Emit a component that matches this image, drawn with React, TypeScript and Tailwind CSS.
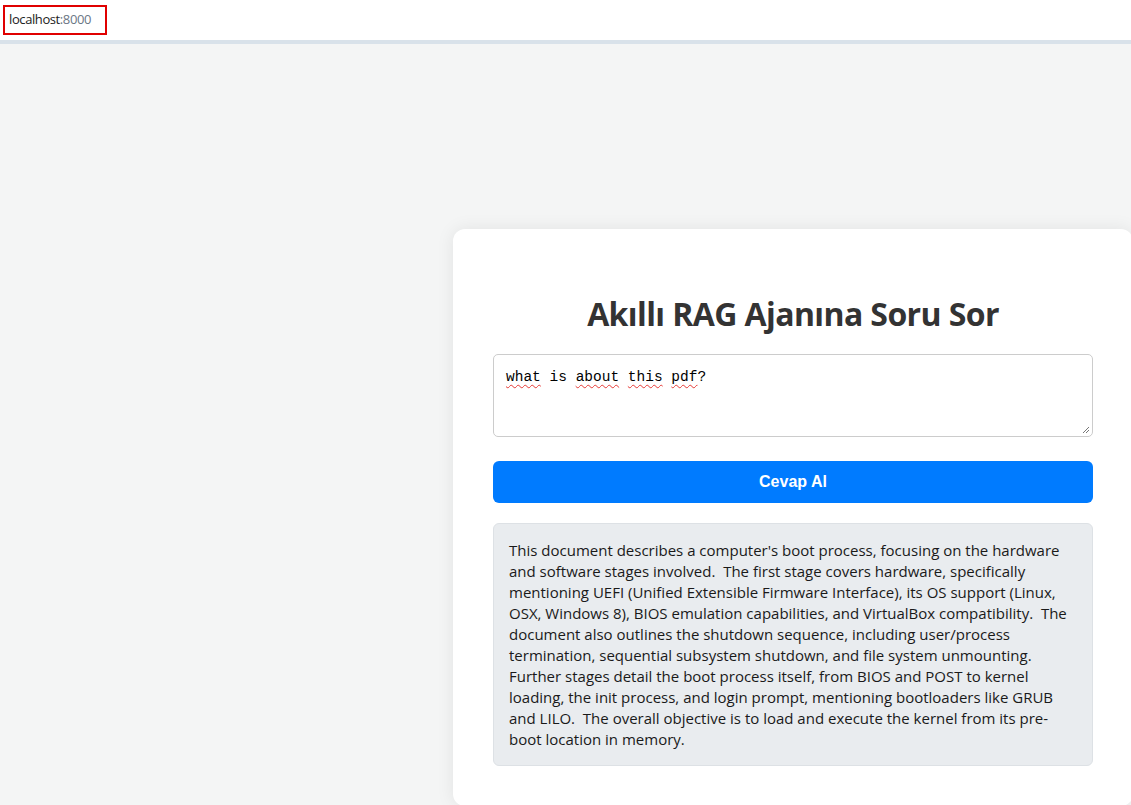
import React from "react";

const answer =
  "This document describes a computer's boot process, focusing on the hardware and software stages involved.\u00a0 The first stage covers hardware, specifically mentioning UEFI (Unified Extensible Firmware Interface), its OS support (Linux, OSX, Windows 8), BIOS emulation capabilities, and VirtualBox compatibility.\u00a0 The document also outlines the shutdown sequence, including user/process termination, sequential subsystem shutdown, and file system unmounting.\u00a0 Further stages detail the boot process itself, from BIOS and POST to kernel loading, the init process, and login prompt, mentioning bootloaders like GRUB and LILO.\u00a0 The overall objective is to load and execute the kernel from its pre-boot location in memory.";

function Squiggle({ children }: { children: React.ReactNode }) {
  return (
    <span className="underline decoration-wavy decoration-[#e53935] decoration-1 underline-offset-[3px]">
      {children}
    </span>
  );
}

export default function App() {
  return (
    <div className="h-[805px] w-[1131px] overflow-hidden bg-[#f4f5f5] font-['Open_Sans',sans-serif]">
      <div className="h-[44px] border-b-4 border-[#d9e2ea] bg-white pl-[3px] pt-[5px]">
        <div className="flex h-[30px] w-[104px] items-center border-2 border-[#e00000] pl-[4px] text-[13px] tracking-[-0.4px] text-[#222]">
          localhost<span className="text-[#6b7785]">:8000</span>
        </div>
      </div>

      <div className="pl-[453px] pt-[185px]">
        <div className="w-[680px] rounded-xl bg-white px-10 pb-10 pt-[65px] shadow-[0_0_18px_rgba(0,0,0,0.08)]">
          <h1 className="text-center text-[32px] font-bold leading-[40px] tracking-[-0.6px] text-[#333]">
            Akıllı RAG Ajanına Soru Sor
          </h1>

          <div className="relative mt-[20px] h-[83px] rounded-[5px] border border-[#cccccc] bg-white px-3 pt-[10px] font-['Liberation_Mono',monospace] text-[14.5px] leading-[24px] text-black">
            <Squiggle>what</Squiggle> is <Squiggle>about</Squiggle>{" "}
            <Squiggle>this</Squiggle> <Squiggle>pdf</Squiggle>?
            <svg
              className="absolute bottom-[2px] right-[2px]"
              width="8"
              height="8"
              viewBox="0 0 8 8"
            >
              <path d="M7 1 L1 7 M7 4 L4 7" stroke="#777" strokeWidth="1" />
            </svg>
          </div>

          <button className="mt-[24px] h-[42px] w-full rounded-[6px] bg-[#007bff] font-['Liberation_Sans',sans-serif] text-[16px] font-bold text-white">
            Cevap Al
          </button>

          <div className="mt-[20px] rounded-[6px] border border-[#dde1e5] bg-[#e9ecef] px-[15px] pb-[15px] pt-[16px] text-[15px] leading-[21px] text-[#1a1a1a]">
            {answer}
          </div>
        </div>
      </div>
    </div>
  );
}
